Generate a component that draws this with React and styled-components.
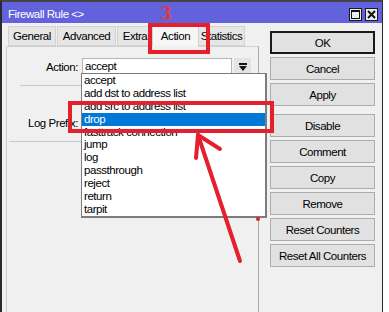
import React from 'react';
import styled, { createGlobalStyle } from 'styled-components';

const GlobalStyle = createGlobalStyle`
  html, body {
    margin: 0;
    padding: 0;
    background: #ffffff;
    overflow: hidden;
  }
  body {
    font-family: "Liberation Sans", Arial, sans-serif;
    font-size: 11px;
    letter-spacing: -0.45px;
    color: #000;
  }
`;

const Window = styled.div`
  position: relative;
  width: 380px;
  height: 310px;
  background: #f0f0f0;
  border-left: 2px solid #2a2a2a;
  border-right: 1px solid #2a2a2a;
  border-top: 2px solid #444;
  overflow: hidden;
  display: flex;
  flex-direction: column;
`;

const TitleBar = styled.div`
  height: 19px;
  flex-shrink: 0;
  background: #6262dc;
  color: #fff;
  display: flex;
  align-items: flex-end;
  justify-content: space-between;
  padding: 0 4px 2px 6px;
`;

const TitleText = styled.span`
  font-size: 11.5px;
  line-height: 14px;
`;

const TitleButtons = styled.div`
  display: flex;
  gap: 3px;
`;

const TitleButton = styled.div`
  width: 11px;
  height: 11px;
  background: #ececec;
  border: 1px solid #1a1a1a;
  display: flex;
  align-items: center;
  justify-content: center;
`;

const Body = styled.div`
  flex: 1;
  display: flex;
  padding-left: 4px;
`;

const LeftColumn = styled.div`
  width: 253px;
  display: flex;
  flex-direction: column;
`;

const TabRow = styled.div`
  display: flex;
  align-items: flex-end;
  height: 23px;
  flex-shrink: 0;
  padding-left: 2px;
  position: relative;
  z-index: 2;
`;

const Tab = styled.div`
  height: ${({ active }) => (active ? '22px' : '20px')};
  width: ${({ w }) => w}px;
  box-sizing: border-box;
  background: ${({ active }) => (active ? '#f6f6f6' : '#e6e6e6')};
  border: 1px solid #d2d2d2;
  border-bottom: ${({ active }) => (active ? '1px solid #f0f0f0' : '1px solid #d2d2d2')};
  margin-left: ${({ active }) => (active ? '-2px' : '0')};
  margin-right: ${({ active }) => (active ? '-1px' : '1px')};
  margin-bottom: ${({ active }) => (active ? '-1px' : '0')};
  display: flex;
  align-items: center;
  justify-content: center;
  white-space: nowrap;
  overflow: hidden;
  font-size: 11.5px;
  position: relative;
  z-index: ${({ active }) => (active ? 3 : 1)};
`;

const Panel = styled.div`
  flex: 1;
  border: 1px solid #cfcfcf;
  border-right-color: #a8a8a8;
  border-bottom: none;
  background: #f0f0f0;
  padding-top: 11px;
`;

const FieldRow = styled.div`
  display: flex;
  align-items: center;
  height: 17px;
  margin-top: ${({ top }) => top || 0}px;
`;

const Label = styled.div`
  width: 71px;
  text-align: right;
  font-size: 11.5px;
  margin-right: 4px;
  white-space: nowrap;
`;

const Input = styled.div`
  width: 146px;
  height: 15px;
  background: #fff;
  border: 1px solid #b5b5b5;
  font-size: 11.5px;
  line-height: 15px;
  padding-left: 2px;
`;

const DropButton = styled.div`
  width: 17px;
  height: 17px;
  margin-left: 2px;
  background: #e3e3e3;
  display: flex;
  align-items: center;
  justify-content: center;
`;

const Separator = styled.div`
  height: 1px;
  background: #c9c9c9;
  margin: ${({ m }) => m};
`;

const ButtonColumn = styled.div`
  width: 105px;
  margin-left: 11px;
  padding-top: 8px;
  display: flex;
  flex-direction: column;
  gap: 3px;
`;

const Button = styled.div`
  height: 23px;
  flex-shrink: 0;
  box-sizing: border-box;
  background: #e1e1e1;
  border: ${({ primary }) => (primary ? '2px solid #1a1a1a' : '1px solid #adadad')};
  display: flex;
  align-items: center;
  justify-content: center;
  white-space: nowrap;
  font-size: 11.5px;
  margin-top: ${({ gapAbove }) => (gapAbove ? '5px' : '0')};
`;

const ListBox = styled.div`
  position: absolute;
  left: 79px;
  top: 71px;
  width: 183px;
  height: 142px;
  background: #fff;
  border: 1px solid #7c7c7c;
  border-right-width: 2px;
  border-bottom-width: 2px;
  z-index: 5;
`;

const ListItem = styled.div`
  height: 12.9px;
  line-height: 13px;
  font-size: 11.5px;
  padding-left: 2px;
  background: ${({ selected }) => (selected ? '#0078d7' : 'transparent')};
  color: ${({ selected }) => (selected ? '#fff' : '#000')};
  white-space: nowrap;
`;

const Annotation = styled.div`
  position: absolute;
  left: ${({ x }) => x}px;
  top: ${({ y }) => y}px;
  width: ${({ w }) => w}px;
  height: ${({ h }) => h}px;
  box-sizing: border-box;
  border: 4px solid #e3202b;
  z-index: 10;
  pointer-events: none;
`;

const StepNumber = styled.div`
  position: absolute;
  left: 159px;
  top: 1px;
  font-family: "Liberation Serif", "Times New Roman", serif;
  font-weight: bold;
  font-size: 21px;
  line-height: 21px;
  letter-spacing: 0;
  color: #e4383c;
  z-index: 10;
`;

const ArrowLayer = styled.svg`
  position: absolute;
  left: -2px;
  top: -2px;
  z-index: 11;
  pointer-events: none;
`;

const actions = [
  'accept',
  'add dst to address list',
  'add src to address list',
  'drop',
  'fasttrack connection',
  'jump',
  'log',
  'passthrough',
  'reject',
  'return',
  'tarpit',
];

const tabs = [
  { name: 'General', w: 48 },
  { name: 'Advanced', w: 59 },
  { name: 'Extra', w: 36 },
  { name: 'Action', w: 47, active: true },
  { name: 'Statistics', w: 47 },
];

const buttons = ['OK', 'Cancel', 'Apply', 'Disable', 'Comment', 'Copy', 'Remove', 'Reset Counters', 'Reset All Counters'];

export default function App() {
  return (
    <>
      <GlobalStyle />
      <Window>
        <TitleBar>
          <TitleText>Firewall Rule &lt;&gt;</TitleText>
          <TitleButtons>
            <TitleButton>
              <svg width="9" height="9" viewBox="0 0 9 9">
                <rect x="0.5" y="0.5" width="8" height="8" fill="none" stroke="#111" strokeWidth="1" />
                <line x1="0" y1="1.5" x2="9" y2="1.5" stroke="#111" strokeWidth="1" />
              </svg>
            </TitleButton>
            <TitleButton>
              <svg width="9" height="9" viewBox="0 0 9 9">
                <path d="M1 1 L8 8 M8 1 L1 8" stroke="#111" strokeWidth="2" />
              </svg>
            </TitleButton>
          </TitleButtons>
        </TitleBar>
        <Body>
          <LeftColumn>
            <TabRow>
              {tabs.map((t) => (
                <Tab key={t.name} w={t.w} active={t.active}>
                  {t.name}
                </Tab>
              ))}
            </TabRow>
            <Panel>
              <FieldRow>
                <Label>Action:</Label>
                <Input>accept</Input>
                <DropButton>
                  <svg width="8" height="8" viewBox="0 0 8 8">
                    <rect x="0" y="0" width="8" height="2" fill="#111" />
                    <path d="M0 3 L8 3 L4 8 Z" fill="#111" />
                  </svg>
                </DropButton>
              </FieldRow>
              <Separator m="10px 8px 0 13px" />
              <FieldRow top={28}>
                <Label>Log Prefix:</Label>
                <Input />
              </FieldRow>
              <Separator m="10px 8px 0 2px" />
            </Panel>
          </LeftColumn>
          <ButtonColumn>
            {buttons.map((b) => (
              <Button key={b} primary={b === 'OK'} gapAbove={b === 'Disable'}>
                {b}
              </Button>
            ))}
          </ButtonColumn>
        </Body>

        <ListBox>
          {actions.map((a) => (
            <ListItem key={a} selected={a === 'drop'}>
              {a}
            </ListItem>
          ))}
        </ListBox>

        <StepNumber>3</StepNumber>
        <Annotation x={146} y={21} w={62} h={31} />
        <Annotation x={66} y={99} w={206} h={32} />
        <ArrowLayer width="389" height="312" viewBox="0 0 389 312">
          <g stroke="#e3202b" strokeWidth="4" strokeLinecap="round" fill="none">
            <line x1="198" y1="135" x2="240" y2="261" />
            <line x1="198" y1="135" x2="196" y2="158" />
            <line x1="198" y1="135" x2="220" y2="149" />
          </g>
          <circle cx="258" cy="219" r="2" fill="#e3202b" />
        </ArrowLayer>
      </Window>
    </>
  );
}
